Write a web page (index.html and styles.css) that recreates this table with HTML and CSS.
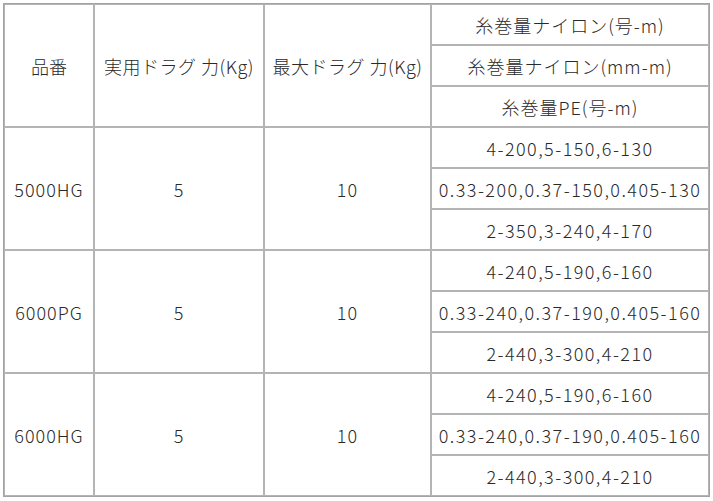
FILE: index.html
```html
<!DOCTYPE html>
<html lang="ja">
<head>
<meta charset="utf-8">
<title>スペック表</title>
<link rel="stylesheet" href="styles.css">
</head>
<body>
<div class="wrap">
<table class="spec">
  <colgroup>
    <col class="c1"><col class="c2"><col class="c3"><col class="c4">
  </colgroup>
  <tbody>
    <tr><td rowspan="3">品番</td><td rowspan="3" class="hd">実用ドラグ 力(Kg)</td><td rowspan="3" class="hd">最大ドラグ 力(Kg)</td><td class="hd2">糸巻量ナイロン(号-m)</td></tr>
    <tr><td class="hd2">糸巻量ナイロン(mm-m)</td></tr>
    <tr><td class="hd2">糸巻量PE(号-m)</td></tr>

    <tr><td rowspan="3" class="num">5000HG</td><td rowspan="3" class="num">5</td><td rowspan="3" class="num">10</td><td class="val">4-200,5-150,6-130</td></tr>
    <tr><td class="val">0.33-200,0.37-150,0.405-130</td></tr>
    <tr><td class="val">2-350,3-240,4-170</td></tr>

    <tr><td rowspan="3" class="num">6000PG</td><td rowspan="3" class="num">5</td><td rowspan="3" class="num">10</td><td class="val">4-240,5-190,6-160</td></tr>
    <tr><td class="val">0.33-240,0.37-190,0.405-160</td></tr>
    <tr><td class="val">2-440,3-300,4-210</td></tr>

    <tr><td rowspan="3" class="num">6000HG</td><td rowspan="3" class="num">5</td><td rowspan="3" class="num">10</td><td class="val">4-240,5-190,6-160</td></tr>
    <tr><td class="val">0.33-240,0.37-190,0.405-160</td></tr>
    <tr><td class="val">2-440,3-300,4-210</td></tr>
  </tbody>
</table>
</div>
</body>
</html>
```

FILE: styles.css
```css
html, body {
  margin: 0;
  padding: 0;
  background: #ffffff;
}

.wrap {
  padding: 3px 0 0 3px;
}

.spec {
  width: 707px;
  table-layout: fixed;
  border-collapse: separate;
  border-spacing: 0;
  border: 1px solid #a3a3a3;
  font-family: "Noto Sans CJK JP", "Liberation Sans", sans-serif;
  font-size: 18px;
  font-weight: 300;
  color: #2a2a2a;
}

.c1 { width: 90px; }
.c2 { width: 170px; }
.c3 { width: 167px; }
.c4 { width: 278px; }

.spec td {
  height: 41px;
  box-sizing: border-box;
  padding: 0;
  border: 1px solid #b4b4b4;
  text-align: center;
  vertical-align: middle;
  white-space: nowrap;
  line-height: 1;
}

.spec td.hd {
  letter-spacing: 0.5px;
}

.spec td.hd2 {
  letter-spacing: 1px;
}

.spec td.num {
  letter-spacing: 1px;
}

.spec td.val {
  letter-spacing: 1.45px;
}
```
